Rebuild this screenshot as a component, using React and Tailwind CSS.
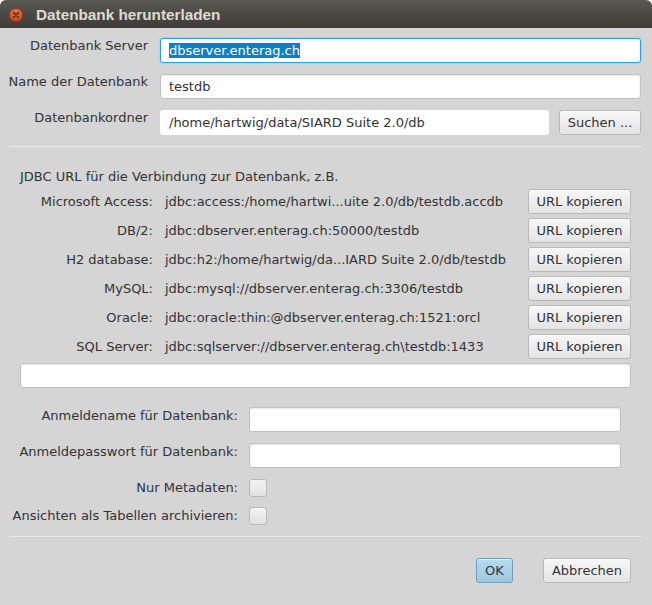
import React from "react";

const font = { fontFamily: '"DejaVu Sans", Verdana, sans-serif' };

function Field({ children, className = "", focused = false, flat = false }) {
  let border = "border border-[#c2c2c2] shadow-[inset_0_1px_2px_rgba(0,0,0,0.10)]";
  if (focused) border = "border border-[#2f9fdc] shadow-[0_0_0_1px_#a7d5ef]";
  if (flat) border = "border border-transparent";
  return (
    <div
      className={`h-[25px] bg-white rounded-[3px] flex items-center pl-[8px] text-[13px] text-[#333] whitespace-nowrap overflow-hidden ${border} ${className}`}
    >
      {children}
    </div>
  );
}

function Button({ children, className = "", primary = false }) {
  const look = primary
    ? "border-[#6f9dbf] bg-gradient-to-b from-[#b7dbee] to-[#9ec8e0]"
    : "border-[#b9b9b9] bg-gradient-to-b from-[#f7f7f7] to-[#e4e4e4]";
  return (
    <div
      className={`h-[25px] rounded-[3px] border flex items-center justify-center text-[13px] text-[#333] whitespace-nowrap shadow-[inset_0_1px_0_rgba(255,255,255,0.7)] ${look} ${className}`}
    >
      {children}
    </div>
  );
}

function Checkbox() {
  return (
    <div className="w-[18px] h-[18px] rounded-[3px] border border-[#b9b9b9] bg-gradient-to-b from-[#f2f2f2] to-[#e2e2e2]" />
  );
}

function Label({ children, className = "" }) {
  return (
    <div className={`flex justify-end whitespace-nowrap text-[13px] leading-[16px] text-[#333] ${className}`}>
      {children}
    </div>
  );
}

const jdbc = [
  ["Microsoft Access:", "jdbc:access:/home/hartwi...uite 2.0/db/testdb.accdb"],
  ["DB/2:", "jdbc:dbserver.enterag.ch:50000/testdb"],
  ["H2 database:", "jdbc:h2:/home/hartwig/da...IARD Suite 2.0/db/testdb"],
  ["MySQL:", "jdbc:mysql://dbserver.enterag.ch:3306/testdb"],
  ["Oracle:", "jdbc:oracle:thin:@dbserver.enterag.ch:1521:orcl"],
  ["SQL Server:", "jdbc:sqlserver://dbserver.enterag.ch\\testdb:1433"],
];

export default function App() {
  return (
    <div className="w-[652px] h-[605px] bg-white" style={font}>
      <div className="w-full h-full flex flex-col rounded-t-[6px] overflow-hidden bg-[#d5d5d5]">
        {/* Titelleiste */}
        <div className="h-[28px] shrink-0 flex items-center bg-gradient-to-b from-[#5a5852] to-[#3d3c38]">
          <div className="ml-[9px] w-[14px] h-[14px] mt-[2px] rounded-full bg-gradient-to-b from-[#f2723f] to-[#d9431c] border border-[#a8391a] flex items-center justify-center">
            <svg width="8" height="8" viewBox="0 0 8 8">
              <path d="M1.5 1.5 L6.5 6.5 M6.5 1.5 L1.5 6.5" stroke="#3b2a22" strokeWidth="1.4" strokeLinecap="round" />
            </svg>
          </div>
          <span
            className="ml-[13px] mt-px text-[15.3px] font-bold text-[#dfdbd2] leading-none"
            style={{ fontFamily: '"Liberation Sans", Arial, sans-serif' }}
          >
            Datenbank herunterladen
          </span>
        </div>

        <div className="flex flex-col pl-[10px] pr-[11px]">
          {/* Verbindung */}
          <div className="grid grid-cols-[138px_1fr] gap-x-[12px] gap-y-[11px] pt-[10px] items-start">
            <Label>Datenbank Server</Label>
            <Field focused>
              <span className="bg-[#0d7fc6] text-white leading-[15px]">dbserver.enterag.ch</span>
            </Field>
            <Label>Name der Datenbank</Label>
            <Field>testdb</Field>
            <Label>Datenbankordner</Label>
            <div className="flex gap-[10px]">
              <Field flat className="flex-1">/home/hartwig/data/SIARD Suite 2.0/db</Field>
              <Button className="w-[82px]">Suchen ...</Button>
            </div>
          </div>

          <div className="mt-[11px] h-px bg-[#ececec]" />

          {/* JDBC URLs */}
          <div className="px-[10px] flex flex-col">
            <div className="mt-[22px] text-[13px] leading-[16px] text-[#333] whitespace-nowrap">
              JDBC URL für die Verbindung zur Datenbank, z.B.
            </div>
            <div className="mt-[4px] flex flex-col gap-[4px]">
              {jdbc.map(([name, url]) => (
                <div key={name} className="flex items-center h-[25px]">
                  <Label className="w-[133px]">{name}</Label>
                  <div className="flex-1 ml-[12px] text-[13px] text-[#333] whitespace-nowrap">{url}</div>
                  <Button className="w-[103px]">URL kopieren</Button>
                </div>
              ))}
            </div>
            <Field className="mt-[4px]"></Field>
          </div>

          {/* Anmeldung */}
          <div className="mt-[19px] grid grid-cols-[228px_372px] gap-x-[11px] items-start">
            <Label className="pt-px">Anmeldename für Datenbank:</Label>
            <Field></Field>
            <Label className="mt-[11px] pt-px">Anmeldepasswort für Datenbank:</Label>
            <Field className="mt-[11px]"></Field>
            <Label className="mt-[11px] h-[18px] items-center">Nur Metadaten:</Label>
            <div className="mt-[11px]"><Checkbox /></div>
            <Label className="mt-[10px] h-[18px] items-center">Ansichten als Tabellen archivieren:</Label>
            <div className="mt-[10px]"><Checkbox /></div>
          </div>

          <div className="mt-[11px] h-px bg-[#ececec]" />

          {/* Aktionen */}
          <div className="mt-[21px] flex justify-end gap-[30px] pr-[10px]">
            <Button primary className="w-[37px]">OK</Button>
            <Button className="w-[88px]">Abbrechen</Button>
          </div>
        </div>
      </div>
    </div>
  );
}
